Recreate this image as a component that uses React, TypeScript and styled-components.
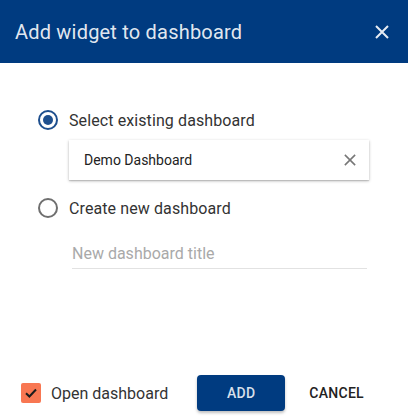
import React, { useState } from 'react';
import styled, { createGlobalStyle } from 'styled-components';

const GlobalStyle = createGlobalStyle`
  html, body {
    margin: 0;
    padding: 0;
    background: #ffffff;
  }
  body {
    font-family: Roboto, "Liberation Sans", sans-serif;
  }
`;

const PRIMARY = '#003b80';

const Dialog = styled.div`
  width: 408px;
  height: 419px;
  display: flex;
  flex-direction: column;
  background: #fff;
  overflow: hidden;
`;

const Header = styled.div`
  height: 63px;
  flex-shrink: 0;
  background: ${PRIMARY};
  display: flex;
  align-items: center;
  justify-content: space-between;
  padding: 0 19px 0 15px;
  color: rgba(255, 255, 255, 0.9);
`;

const Title = styled.h2`
  margin: 0;
  font-size: 20px;
  font-weight: 400;
  letter-spacing: 0.2px;
`;

const IconButton = styled.button<{ $color?: string }>`
  border: 0;
  background: none;
  padding: 0;
  display: flex;
  cursor: pointer;
  color: ${(p) => p.$color || 'inherit'};
`;

const Body = styled.div`
  flex: 1;
  min-height: 0;
  padding: 45px 0 0 38px;
  display: flex;
  flex-direction: column;
`;

const RadioRow = styled.label`
  display: flex;
  align-items: center;
  gap: 11px;
  height: 24px;
  font-size: 16px;
  letter-spacing: 0.1px;
  color: #333;
  cursor: pointer;
`;

const RadioCircle = styled.span<{ $checked: boolean }>`
  width: 20px;
  height: 20px;
  box-sizing: border-box;
  border-radius: 50%;
  border: 2px solid ${(p) => (p.$checked ? '#1e4f8e' : '#6f6f6f')};
  display: flex;
  align-items: center;
  justify-content: center;
  &::after {
    content: '';
    width: 10px;
    height: 10px;
    border-radius: 50%;
    background: ${(p) => (p.$checked ? '#1e4f8e' : 'transparent')};
  }
`;

const SelectBox = styled.div`
  margin: 8px 0 0 31px;
  width: 300px;
  height: 40px;
  box-sizing: border-box;
  background: #fff;
  box-shadow: 0 1px 3px rgba(0, 0, 0, 0.25), 0 1px 1px rgba(0, 0, 0, 0.12);
  display: flex;
  align-items: center;
  justify-content: space-between;
  padding: 0 13px 0 15px;
  font-size: 14px;
  color: #222;
`;

const SecondRadio = styled.div`
  margin-top: 16px;
`;

const TitleInput = styled.input`
  margin: 18px 0 0 34px;
  width: 295px;
  box-sizing: border-box;
  border: 0;
  border-bottom: 1px solid #e2e2e2;
  padding: 6px 0 5px 0;
  font-family: inherit;
  font-size: 16px;
  color: #333;
  outline: none;
  &::placeholder {
    color: #a9a9a9;
  }
`;

const Footer = styled.div`
  height: 52px;
  flex-shrink: 0;
  display: flex;
  align-items: center;
  padding: 0 0 0 21px;
  box-sizing: border-box;
`;

const CheckRow = styled.label`
  display: flex;
  align-items: center;
  gap: 10px;
  font-size: 16px;
  color: #333;
  cursor: pointer;
`;

const CheckBox = styled.span`
  width: 20px;
  height: 20px;
  border-radius: 2px;
  background: #f87752;
  display: flex;
  align-items: center;
  justify-content: center;
`;

const Button = styled.button<{ $primary?: boolean }>`
  height: 36px;
  border: 0;
  border-radius: 4px;
  font-family: inherit;
  font-size: 14px;
  font-weight: 500;
  letter-spacing: 0.3px;
  cursor: pointer;
  background: ${(p) => (p.$primary ? PRIMARY : 'transparent')};
  color: ${(p) => (p.$primary ? 'rgba(255,255,255,0.85)' : '#222')};
  box-shadow: ${(p) => (p.$primary ? '0 2px 3px rgba(0,0,0,0.25)' : 'none')};
  min-width: ${(p) => (p.$primary ? '88px' : '66px')};
  padding: 0 8px;
`;

const Actions = styled.div`
  display: flex;
  gap: 16px;
  margin-left: 29px;
`;

const CloseIcon = ({ size, stroke }: { size: number; stroke: number }) => (
  <svg width={size} height={size} viewBox="0 0 14 14">
    <path d="M1 1 L13 13 M13 1 L1 13" stroke="currentColor" strokeWidth={stroke} />
  </svg>
);

const App: React.FC = () => {
  const [mode, setMode] = useState<'existing' | 'new'>('existing');
  const [openDash, setOpenDash] = useState(true);

  return (
    <Dialog>
      <GlobalStyle />
      <Header>
        <Title>Add widget to dashboard</Title>
        <IconButton>
          <CloseIcon size={14} stroke={2} />
        </IconButton>
      </Header>
      <Body>
        <RadioRow onClick={() => setMode('existing')}>
          <RadioCircle $checked={mode === 'existing'} />
          Select existing dashboard
        </RadioRow>
        <SelectBox>
          <span>Demo Dashboard</span>
          <IconButton $color="#777">
            <CloseIcon size={12} stroke={1.8} />
          </IconButton>
        </SelectBox>
        <SecondRadio>
          <RadioRow onClick={() => setMode('new')}>
            <RadioCircle $checked={mode === 'new'} />
            Create new dashboard
          </RadioRow>
        </SecondRadio>
        <TitleInput placeholder="New dashboard title" />
      </Body>
      <Footer>
        <CheckRow onClick={() => setOpenDash(!openDash)}>
          <CheckBox>
            {openDash && (
              <svg width="14" height="14" viewBox="0 0 14 14">
                <path d="M2 7.2 L5.4 10.5 L12 3.5" stroke="#1c1c1c" strokeWidth="2" fill="none" />
              </svg>
            )}
          </CheckBox>
          Open dashboard
        </CheckRow>
        <Actions>
          <Button $primary>ADD</Button>
          <Button>CANCEL</Button>
        </Actions>
      </Footer>
    </Dialog>
  );
};

export default App;
